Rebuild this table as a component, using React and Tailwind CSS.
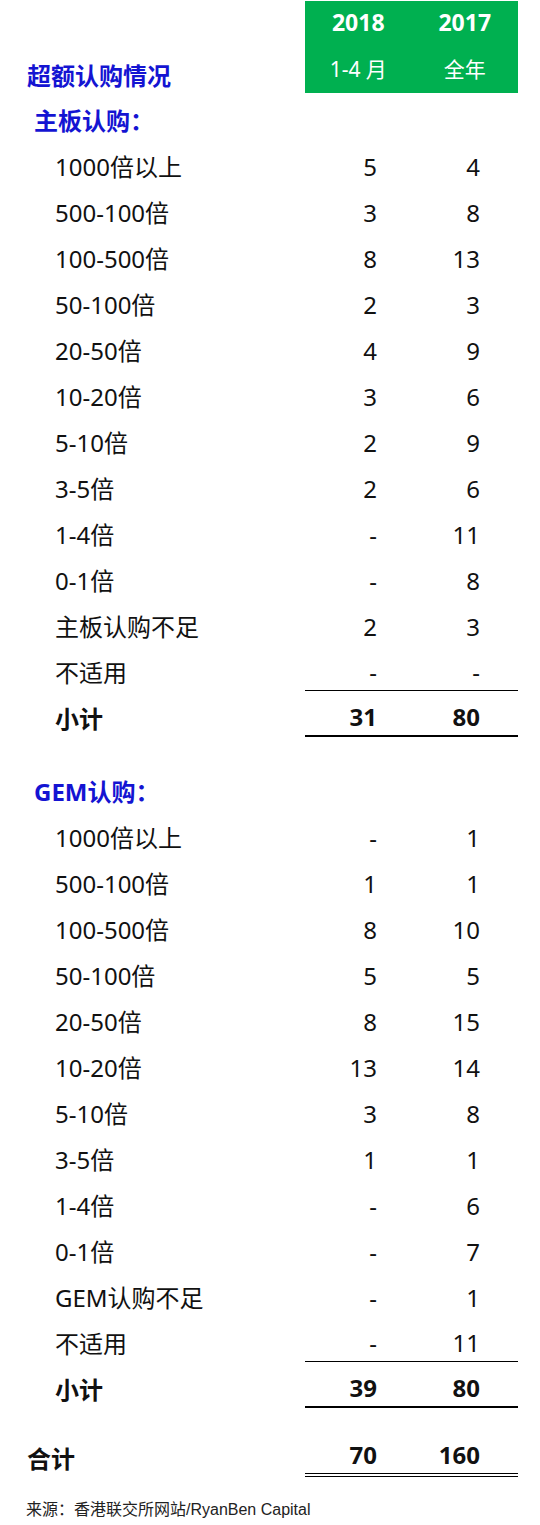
import React from "react";

const mainRows = [
  ["1000倍以上", "5", "4"],
  ["500-100倍", "3", "8"],
  ["100-500倍", "8", "13"],
  ["50-100倍", "2", "3"],
  ["20-50倍", "4", "9"],
  ["10-20倍", "3", "6"],
  ["5-10倍", "2", "9"],
  ["3-5倍", "2", "6"],
  ["1-4倍", "-", "11"],
  ["0-1倍", "-", "8"],
  ["主板认购不足", "2", "3"],
  ["不适用", "-", "-"],
];

const gemRows = [
  ["1000倍以上", "-", "1"],
  ["500-100倍", "1", "1"],
  ["100-500倍", "8", "10"],
  ["50-100倍", "5", "5"],
  ["20-50倍", "8", "15"],
  ["10-20倍", "13", "14"],
  ["5-10倍", "3", "8"],
  ["3-5倍", "1", "1"],
  ["1-4倍", "-", "6"],
  ["0-1倍", "-", "7"],
  ["GEM认购不足", "-", "1"],
  ["不适用", "-", "11"],
];

const font = { fontFamily: '"Noto Sans", "Noto Sans CJK SC", sans-serif' };

function Row({ label, a, b, bold, indent = "pl-[55px]", border = "" }) {
  return (
    <div className="flex h-[46px] items-end">
      <div className={`flex-1 ${indent} pb-[3px] leading-[30px] ${bold ? "font-bold" : ""}`}>
        {label}
      </div>
      <div className={`flex w-[213px] mr-[22px] ${border}`}>
        <div className={`w-[106px] text-right pr-[34px] pb-[3px] leading-[30px] ${bold ? "font-bold" : ""}`}>
          {a}
        </div>
        <div className={`w-[107px] text-right pr-[38px] pb-[3px] leading-[30px] ${bold ? "font-bold" : ""}`}>
          {b}
        </div>
      </div>
    </div>
  );
}

function Section({ title, rows, total }) {
  return (
    <>
      <div className="flex h-[46px] items-end">
        <div className="pl-[34px] pb-[3px] leading-[30px] font-bold text-[#1414d2]">{title}</div>
      </div>
      {rows.map((r, i) => (
        <Row
          key={i}
          label={r[0]}
          a={r[1]}
          b={r[2]}
          border={i === rows.length - 1 ? "border-b border-black" : ""}
        />
      ))}
      <Row label="小计" a={total} b="80" bold border="border-b-2 border-black" />
    </>
  );
}

export default function App() {
  return (
    <div className="w-[540px] h-[1525px] bg-white text-[24px] text-[#111]" style={font}>
      {/* header */}
      <div className="flex pt-px">
        <div className="flex-1 flex items-end pl-[27px] pb-[2px]">
          <span className="font-bold text-[#1414d2] leading-[30px]">超额认购情况</span>
        </div>
        <div className="w-[213px] mr-[22px] h-[92px] bg-[#00b050] text-white grid grid-cols-2 grid-rows-2">
          <div className="flex items-center justify-center font-bold text-[23px] pb-[4px]">2018</div>
          <div className="flex items-center justify-center font-bold text-[23px] pb-[4px]">2017</div>
          <div className="flex items-center justify-center text-[21px]">1-4 月</div>
          <div className="flex items-center justify-center text-[21px]">全年</div>
        </div>
      </div>

      <Section title="主板认购：" rows={mainRows} total="31" />
      <div className="h-[27px]" />
      <Section title="GEM认购：" rows={gemRows} total="39" />
      <div className="h-[23px]" />

      <div className="flex h-[46px] items-end">
        <div className="flex-1 pl-[27px] pb-[3px] leading-[30px] font-bold">合计</div>
        <div className="flex w-[213px] mr-[22px] border-b-[4px] border-double border-black">
          <div className="w-[106px] text-right pr-[34px] pb-[3px] leading-[30px] font-bold">70</div>
          <div className="w-[107px] text-right pr-[38px] pb-[3px] leading-[30px] font-bold">160</div>
        </div>
      </div>

      <div
        className="pl-[26px] mt-[23px] text-[16px] text-[#222] leading-[20px]"
        style={{ fontFamily: '"Liberation Sans", "Noto Sans CJK SC", sans-serif' }}
      >
        来源：香港联交所网站/RyanBen Capital
      </div>
    </div>
  );
}
